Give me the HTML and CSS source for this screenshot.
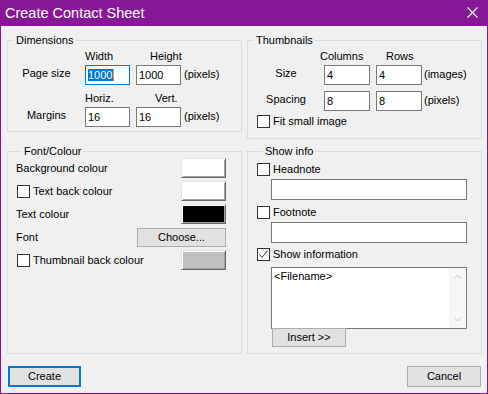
FILE: index.html
```html
<!DOCTYPE html>
<html lang="en">
<head>
  <meta charset="UTF-8" />
  <title>Create Contact Sheet</title>
  <link rel="stylesheet" href="styles.css">
</head>
<body>
  <div class="window">
    <div class="titlebar">
      <span class="title">Create Contact Sheet</span>
      <svg class="close" width="11" height="11" viewBox="0 0 11 11">
        <path d="M0.5 0.5 L10.5 10.5 M10.5 0.5 L0.5 10.5" stroke="#fff" stroke-width="1.1" fill="none" />
      </svg>
    </div>

    <div class="content">
      <div class="groups">
        <fieldset class="group dims">
          <legend>Dimensions</legend>
          <div class="size-grid dims-grid">
            <span></span>
            <span class="head">Width</span>
            <span class="head push-height">Height</span>
            <span></span>

            <span class="row-label">Page size</span>
            <div class="field focused"><span class="sel">1000</span></div>
            <div class="field">1000</div>
            <span class="unit">(pixels)</span>

            <span class="second"></span>
            <span class="head second">Horiz.</span>
            <span class="head second push-vert">Vert.</span>
            <span class="second"></span>

            <span class="row-label">Margins</span>
            <div class="field">16</div>
            <div class="field">16</div>
            <span class="unit">(pixels)</span>
          </div>
        </fieldset>

        <fieldset class="group thumbs">
          <legend>Thumbnails</legend>
          <div class="size-grid thumbs-grid">
            <span></span>
            <span class="head pull-cols">Columns</span>
            <span class="head push-rows">Rows</span>
            <span></span>

            <span class="row-label">Size</span>
            <div class="field">4</div>
            <div class="field">4</div>
            <span class="unit">(images)</span>

            <span class="row-label spacing">Spacing</span>
            <div class="field spacing">8</div>
            <div class="field spacing">8</div>
            <span class="unit spacing">(pixels)</span>
          </div>
          <label class="check-row fit"><span class="check"></span>Fit small image</label>
        </fieldset>

        <fieldset class="group colours">
          <legend>Font/Colour</legend>
          <div class="colour-row">
            <span>Background colour</span>
            <span class="swatch"></span>
          </div>
          <div class="colour-row">
            <label class="check-row"><span class="check"></span>Text back colour</label>
            <span class="swatch"></span>
          </div>
          <div class="colour-row">
            <span>Text colour</span>
            <span class="swatch black"></span>
          </div>
          <div class="colour-row">
            <span>Font</span>
            <button class="btn choose">Choose...</button>
          </div>
          <div class="colour-row">
            <label class="check-row"><span class="check"></span>Thumbnail back colour</label>
            <span class="swatch grey"></span>
          </div>
        </fieldset>

        <fieldset class="group info">
          <legend>Show info</legend>
          <label class="check-row"><span class="check"></span>Headnote</label>
          <div class="field wide"></div>
          <label class="check-row gap-top"><span class="check"></span>Footnote</label>
          <div class="field wide"></div>
          <label class="check-row gap-top-2">
            <span class="check checked">
              <svg width="11" height="11" viewBox="0 0 11 11"><path d="M1.5 5.5 L4 8.5 L9.5 1.5" stroke="#333" stroke-width="1" fill="none" /></svg>
            </span>Show information
          </label>
          <div class="memo">
            <span class="memo-text">&lt;Filename&gt;</span>
            <div class="scroll">
              <svg width="9" height="6" viewBox="0 0 9 6"><path d="M0.5 5 L4.5 1 L8.5 5" stroke="#c8c8c8" stroke-width="1" fill="none" /></svg>
              <svg width="9" height="6" viewBox="0 0 9 6"><path d="M0.5 1 L4.5 5 L8.5 1" stroke="#c8c8c8" stroke-width="1" fill="none" /></svg>
            </div>
          </div>
          <button class="btn insert">Insert &gt;&gt;</button>
        </fieldset>
      </div>

      <div class="actions">
        <button class="btn create">Create</button>
        <button class="btn cancel">Cancel</button>
      </div>
    </div>
  </div>
</body>
</html>
```

FILE: styles.css
```css
* {
  box-sizing: border-box;
}
body {
  margin: 0;
  background-color: #f0f0f0;
  font-family: "Liberation Sans", Arial, sans-serif;
  font-size: 11px;
  color: #000000;
}
.window {
  width: 488px;
  height: 394px;
  border: 1px solid #881798;
  border-top: none;
  background-color: #f0f0f0;
  overflow: hidden;
}
.titlebar {
  height: 26px;
  margin: 0 -1px;
  background-color: #881798;
  color: #ffffff;
  display: flex;
  align-items: center;
  justify-content: space-between;
  padding: 0 10px 0 5px;
}
.title {
  font-size: 14.5px;
  line-height: 26px;
}
.close {
  display: block;
  margin-bottom: 1px;
}
.content {
  padding: 8px 6px 0 6px;
}
.groups {
  display: grid;
  grid-template-columns: 235px 235px;
  grid-template-rows: auto 209px;
  column-gap: 5px;
  row-gap: 6px;
  align-items: start;
}
.group {
  margin: 0;
  min-width: 0;
  border: 1px solid #dcdcdc;
  padding: 0;
}
.group legend {
  margin-left: 6px;
  padding: 0 2px;
  line-height: 13px;
}
.group.colours,
.group.info {
  height: 209px;
}

/* size grids */
.size-grid {
  display: grid;
  row-gap: 2px;
  align-items: center;
}
.dims-grid {
  grid-template-columns: 77px 51px 48px auto;
  padding: 3px 0 4px 0;
}
.thumbs-grid {
  grid-template-columns: 76px 52px 48px auto;
  padding-top: 3px;
}
.head {
  line-height: 13px;
}
.second {
  margin-top: 5px;
}
.push-height {
  padding-left: 14px;
}
.push-vert {
  padding-left: 19px;
}
.pull-cols {
  margin-left: -4px;
}
.push-rows {
  padding-left: 10px;
}
.row-label {
  text-align: center;
  padding-bottom: 4px;
}
.unit {
  padding-bottom: 2px;
}
.spacing {
  margin-top: 4px;
}
.field {
  height: 20px;
  width: 45px;
  background-color: #ffffff;
  border: 1px solid #7a7a7a;
  padding: 3px 0 0 2px;
  line-height: 13px;
}
.thumbs-grid .field {
  width: 46px;
}
.field.focused {
  border-color: #0078d7;
}
.sel {
  background-color: #0078d7;
  color: #ffffff;
  border-right: 1px solid #ff8c1a;
  padding-right: 1px;
}
.field.wide {
  width: 196px;
  height: 21px;
  margin: 2px 0 0 14px;
}

/* checkboxes */
.check-row {
  display: flex;
  align-items: center;
  gap: 3px;
  height: 16px;
}
.check {
  width: 13px;
  height: 13px;
  border: 1px solid #333333;
  background-color: #ffffff;
  display: flex;
  align-items: center;
  justify-content: center;
}
.check svg {
  display: block;
}
.fit {
  margin: 2px 0 9px 9px;
}

/* font / colour */
.colours {
  padding: 0 15px 0 8px;
}
.colour-row {
  display: flex;
  align-items: center;
  justify-content: space-between;
  height: 20px;
  margin-bottom: 3px;
}
.colour-row .check-row {
  margin-left: 1px;
}
.swatch {
  width: 45px;
  height: 20px;
  background-color: #ffffff;
  border: 1px solid;
  border-color: #e3e3e3 #696969 #696969 #e3e3e3;
  box-shadow: inset 1px 1px #ffffff, inset -1px -1px #a0a0a0;
}
.swatch.black {
  background-color: #000000;
}
.swatch.grey {
  background-color: #c0c0c0;
}
.btn {
  font-family: "Liberation Sans", Arial, sans-serif;
  font-size: 11px;
  color: #000000;
  background-color: #e1e1e1;
  border: 1px solid #adadad;
  padding: 0;
  line-height: 13px;
}
.choose {
  width: 89px;
  height: 19px;
}

/* show info */
.info {
  padding: 3px 0 0 9px;
}
.gap-top {
  margin-top: 4px;
}
.gap-top-2 {
  margin-top: 3px;
}
.memo {
  position: relative;
  width: 196px;
  height: 62px;
  margin: 5px 0 0 14px;
  background-color: #ffffff;
  border: 1px solid #7a7a7a;
}
.memo-text {
  display: block;
  padding: 2px 0 0 2px;
  line-height: 13px;
}
.scroll {
  position: absolute;
  top: 0;
  right: 0;
  bottom: 0;
  width: 17px;
  background-color: #f7f7f7;
  display: flex;
  flex-direction: column;
  justify-content: space-between;
  align-items: center;
  padding: 6px 0 6px 0;
}
.scroll svg {
  display: block;
}
.insert {
  position: relative;
  display: block;
  width: 74px;
  height: 19px;
  margin: -1px 0 0 15px;
}

/* bottom buttons */
.actions {
  display: flex;
  justify-content: space-between;
  margin-top: 12px;
  padding: 0 0 0 1px;
}
.create {
  width: 73px;
  height: 21px;
  border: 2px solid #0078d7;
}
.cancel {
  width: 74px;
  height: 21px;
}
```
